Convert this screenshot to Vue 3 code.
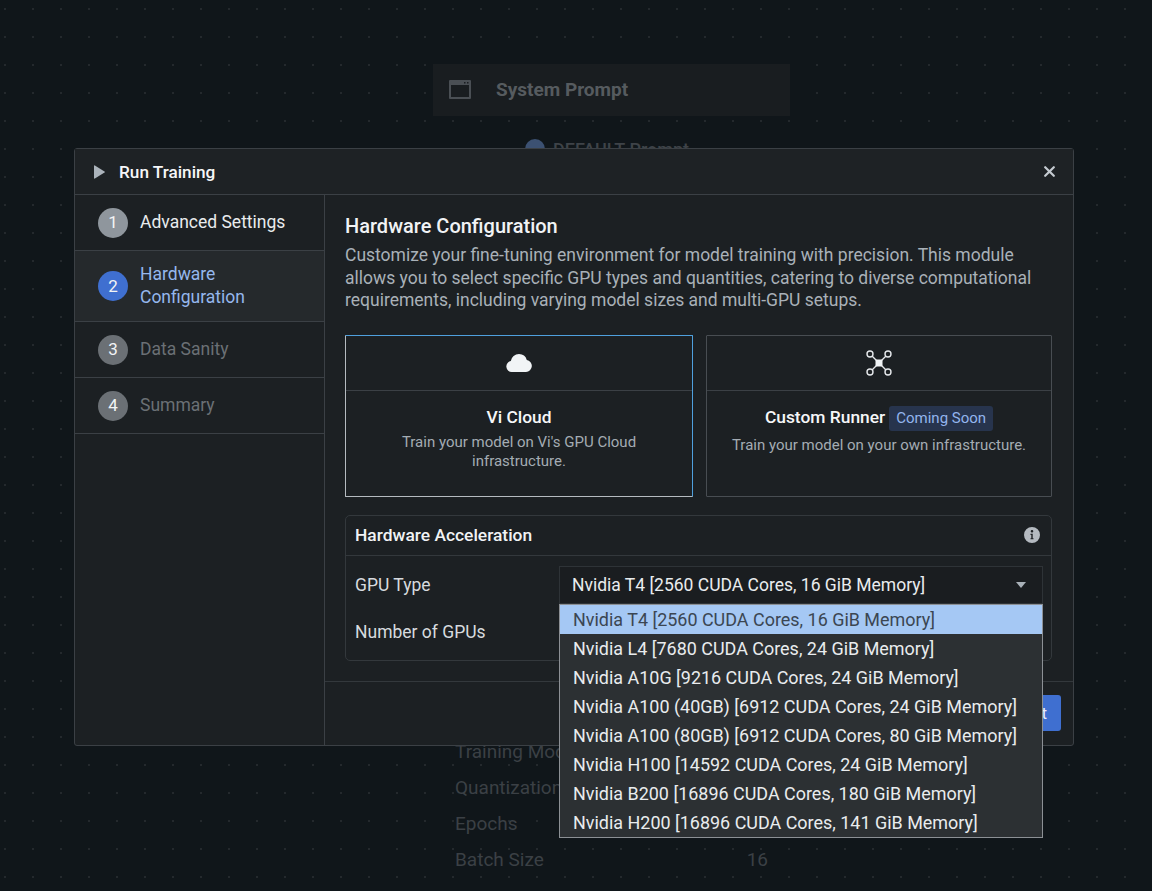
<script setup>
const steps = [
  { n: 1, label: 'Advanced Settings', state: 'done' },
  { n: 2, label: 'Hardware Configuration', state: 'active' },
  { n: 3, label: 'Data Sanity', state: 'todo' },
  { n: 4, label: 'Summary', state: 'todo' }
]
const gpus = [
  'Nvidia T4 [2560 CUDA Cores, 16 GiB Memory]',
  'Nvidia L4 [7680 CUDA Cores, 24 GiB Memory]',
  'Nvidia A10G [9216 CUDA Cores, 24 GiB Memory]',
  'Nvidia A100 (40GB) [6912 CUDA Cores, 24 GiB Memory]',
  'Nvidia A100 (80GB) [6912 CUDA Cores, 80 GiB Memory]',
  'Nvidia H100 [14592 CUDA Cores, 24 GiB Memory]',
  'Nvidia B200 [16896 CUDA Cores, 180 GiB Memory]',
  'Nvidia H200 [16896 CUDA Cores, 141 GiB Memory]'
]
</script>

<template>
  <div class="page">
    <div class="bg-col">
      <div class="bg-head">
        <svg width="22" height="19" viewBox="0 0 22 19"><path fill="#4a4f54" fill-rule="evenodd" d="M1 0h20a1 1 0 0 1 1 1v17a1 1 0 0 1-1 1H1a1 1 0 0 1-1-1V1a1 1 0 0 1 1-1zm1 5v12h18V5zm13-3v1.500h1.500V2zm3 0v1.500h1.500V2z"/></svg>
        <span>System Prompt</span>
      </div>
      <div class="bg-default"><i></i>DEFAULT Prompt</div>
      <div class="bg-rows">
        <div class="bg-row">Training Mode</div>
        <div class="bg-row">Quantization</div>
        <div class="bg-row">Epochs</div>
        <div class="bg-row"><span>Batch Size</span><span>16</span></div>
      </div>
    </div>

    <div class="modal">
      <header class="m-head">
        <svg class="play" width="11" height="14" viewBox="0 0 11 14"><path fill="#abb3bb" d="M0 1v12a.6.6 0 0 0 .9.5l9.600-6a.6.6 0 0 0 0-1L.9.5A.6.6 0 0 0 0 1z"/></svg>
        <span class="m-title">Run Training</span>
        <svg class="close" width="11" height="11" viewBox="0 0 11 11"><path stroke="#c5cbd1" stroke-width="2.200" stroke-linecap="round" d="M1.200 1.200l8.600 8.600M9.800 1.200l-8.600 8.600"/></svg>
      </header>
      <div class="m-body">
        <aside class="side">
          <div v-for="s in steps" :key="s.n" class="step" :class="s.state">
            <span class="num">{{ s.n }}</span>
            <span class="lab">{{ s.label }}</span>
          </div>
        </aside>
        <main class="main">
          <div class="content">
            <h2>Hardware Configuration</h2>
            <p class="intro">Customize your fine-tuning environment for model training with precision. This module allows you to select specific GPU types and quantities, catering to diverse computational requirements, including varying model sizes and multi-GPU setups.</p>
            <div class="cards">
              <div class="card sel">
                <div class="c-icon">
                  <svg width="26" height="18" viewBox="0 0 26 18"><path fill="#f1f4f6" d="M6 18a5.500 5.500 0 0 1-1.200-10.900A8.300 8.300 0 0 1 13 0a8.200 8.200 0 0 1 7.800 5.900A6.100 6.100 0 0 1 20 18z"/></svg>
                </div>
                <div class="c-body">
                  <div class="c-title">Vi Cloud</div>
                  <div class="c-desc">Train your model on Vi's GPU Cloud infrastructure.</div>
                </div>
              </div>
              <div class="card">
                <div class="c-icon">
                  <svg width="26" height="26" viewBox="0 0 26 26" fill="none" stroke="#e6e9ec" stroke-width="1.400">
                    <circle cx="4" cy="4" r="3"/><circle cx="22" cy="4" r="3"/><circle cx="4" cy="22" r="3"/><circle cx="22" cy="22" r="3"/>
                    <path d="M6 6l14 14M20 6L6 20"/>
                    <rect x="9.500" y="9.500" width="7" height="7" rx="1" fill="#f1f4f6" stroke="none"/>
                  </svg>
                </div>
                <div class="c-body">
                  <div class="c-title">Custom Runner <span class="tag">Coming Soon</span></div>
                  <div class="c-desc">Train your model on your own infrastructure.</div>
                </div>
              </div>
            </div>
            <section class="panel">
              <div class="p-head">
                <span>Hardware Acceleration</span>
                <svg width="16" height="16" viewBox="0 0 16 16"><path fill="#b4bac0" fill-rule="evenodd" d="M8 0a8 8 0 1 1 0 16A8 8 0 0 1 8 0zm0 3a1.300 1.300 0 1 0 0 2.600A1.300 1.300 0 0 0 8 3zM6.500 6.800v1.100h.8v3.300h-.8v1.100h3v-1.100h-.8V6.800z"/></svg>
              </div>
              <div class="p-body">
                <div class="p-row">
                  <label>GPU Type</label>
                  <div class="select">
                    <span>{{ gpus[0] }}</span>
                    <i class="caret"></i>
                  </div>
                </div>
                <div class="p-row"><label>Number of GPUs</label></div>
              </div>
            </section>
          </div>
          <footer class="m-foot"><button class="next">Next</button></footer>
        </main>
      </div>
      <ul class="menu">
        <li v-for="(g, i) in gpus" :key="g" :class="{ on: i === 0 }">{{ g }}</li>
      </ul>
    </div>
  </div>
</template>

<style>
html, body { margin: 0; background: #10161a; }
</style>

<style scoped>
.page {
  position: relative;
  width: 1152px;
  height: 891px;
  overflow: hidden;
  font-family: Roboto, "Liberation Sans", sans-serif;
  background-color: #10161a;
  background-image: radial-gradient(circle at 5px 9px, #24292d 0.8px, transparent 1.2px);
  background-size: 28px 28px;
  color: #e6e9ec;
}
.bg-col { width: 357px; margin-left: 433px; padding-top: 64px; }
.bg-head {
  height: 51px;
  padding-bottom: 1px;
  background: #191d20;
  display: flex;
  align-items: center;
  gap: 25px;
  padding-left: 16px;
  color: #565b5f;
  font-size: 19px;
  font-weight: 700;
}
.bg-default {
  display: flex;
  align-items: center;
  gap: 8px;
  margin: 21px 0 0 92px;
  color: #3e4348;
  font-size: 18px;
  font-weight: 500;
  height: 24px;
}
.bg-default i { width: 20px; height: 20px; border-radius: 50%; background: #3c5172; }
.bg-rows { margin-top: 572px; padding: 0 22px; }
.bg-row {
  height: 36px;
  display: flex;
  justify-content: space-between;
  align-items: center;
  color: #3b4045;
  font-size: 19px;
}
.modal {
  position: absolute;
  left: 74px;
  top: 148px;
  width: 1000px;
  height: 598px;
  box-sizing: border-box;
  border: 1px solid #3b4045;
  border-radius: 3px;
  background: #1c2023;
  display: flex;
  flex-direction: column;
}
.m-head {
  height: 45px;
  flex: none;
  display: flex;
  align-items: center;
  padding: 0 18px 0 19px;
  background: #1e2225;
  border-bottom: 1px solid #3b4045;
}
.play { margin-right: 14px; }
.m-title { font-size: 17.200px; font-weight: 500; color: #f6f7f8; }
.close { margin-left: auto; }
.m-body { flex: 1; display: flex; min-height: 0; }
.side { width: 249px; flex: none; border-right: 1px solid #3b4045; }
.step {
  display: flex;
  align-items: center;
  gap: 12px;
  padding: 0 23px;
  min-height: 55px;
  border-bottom: 1px solid #3b4045;
  font-size: 17.500px;
  line-height: 23px;
}
.num {
  width: 30px;
  height: 30px;
  flex: none;
  border-radius: 50%;
  display: flex;
  align-items: center;
  justify-content: center;
  color: #f2f4f5;
  font-size: 17px;
}
.done .num { background: #8f969d; }
.done .lab { color: #e9ecee; }
.active { min-height: 70px; background: #25292c; }
.active .num { background: #3f6fd0; }
.active .lab { color: #95b7ed; }
.todo .num { background: #6b7075; }
.todo .lab { color: #6b7075; }
.main { flex: 1; display: flex; flex-direction: column; min-width: 0; }
.content { flex: 1; padding: 17px 21px 0 20px; min-height: 0; }
h2 { margin: 0; font-size: 20px; line-height: 28px; font-weight: 500; color: #f1f3f5; }
.intro { margin: 4px 0 0; font-size: 17.500px; line-height: 22.500px; color: #a9b1b8; }
.cards { display: flex; justify-content: space-between; margin-top: 23px; }
.card {
  width: 346px;
  height: 162px;
  box-sizing: border-box;
  border: 1px solid #484d52;
  border-radius: 1px;
  display: flex;
  flex-direction: column;
}
.card.sel {
  width: 348px;
  border-color: #4fa0dd;
  border-bottom-color: #b5bbc0;
  border-left-color: #b5bbc0;
}
.c-icon {
  height: 54px;
  flex: none;
  display: flex;
  align-items: center;
  justify-content: center;
  border-bottom: 1px solid #3b4045;
}
.c-body { padding: 14px 16px 0; text-align: center; }
.c-title {
  font-size: 17.400px;
  font-weight: 500;
  color: #f6f7f8;
  line-height: 24px;
  min-height: 25px;
  display: flex;
  align-items: flex-start;
  justify-content: center;
  gap: 4px;
}
.c-desc { margin-top: 3px; font-size: 15px; line-height: 19px; color: #a4acb3; }
.tag {
  background: #27344d;
  color: #93b5ed;
  font-size: 15px;
  font-weight: 400;
  line-height: 25px;
  margin: 1px 0 2px;
  padding: 0 7px;
  border-radius: 3px;
}
.panel {
  margin-top: 18px;
  height: 146px;
  box-sizing: border-box;
  border: 1px solid #33383c;
  border-radius: 5px;
}
.p-head {
  height: 39px;
  border-bottom: 1px solid #33383c;
  display: flex;
  align-items: center;
  justify-content: space-between;
  padding: 0 11px 0 9px;
  font-size: 17.400px;
  font-weight: 500;
  color: #f1f3f5;
}
.p-body { padding: 10px 8px 0 9px; }
.p-row { height: 47px; display: flex; align-items: flex-start; justify-content: space-between; }
.p-row label { line-height: 38px; font-size: 17.500px; color: #d7dbdf; }
.select {
  width: 484px;
  height: 38px;
  box-sizing: border-box;
  background: #1a1d20;
  border: 1px solid #2e3337;
  display: flex;
  align-items: center;
  justify-content: space-between;
  padding: 0 16px 0 12px;
  font-size: 17.500px;
  color: #e9ecee;
}
.caret { width: 0; height: 0; border-left: 5px solid transparent; border-right: 5px solid transparent; border-top: 6px solid #a9b1b8; }
.m-foot {
  height: 64px;
  box-sizing: border-box;
  flex: none;
  border-top: 1px solid #33383c;
  display: flex;
  justify-content: flex-end;
  align-items: flex-start;
  padding: 13px 12px 0 0;
}
.next {
  height: 36px;
  padding: 0 14px;
  background: #3f6fd0;
  border: 0;
  border-radius: 3px;
  color: #e9eefb;
  font: 17px Roboto, sans-serif;
}
.menu {
  position: absolute;
  left: 484px;
  top: 455px;
  width: 484px;
  height: 234px;
  box-sizing: border-box;
  margin: 0;
  padding: 0;
  list-style: none;
  background: #2c3033;
  border: 1px solid #8c9095;
}
.menu li {
  height: 29px;
  line-height: 30px;
  padding-left: 13px;
  font-size: 17.960px;
  color: #e9ecee;
}
.menu li.on { background: #a5c8f4; color: #3b4652; }
</style>
